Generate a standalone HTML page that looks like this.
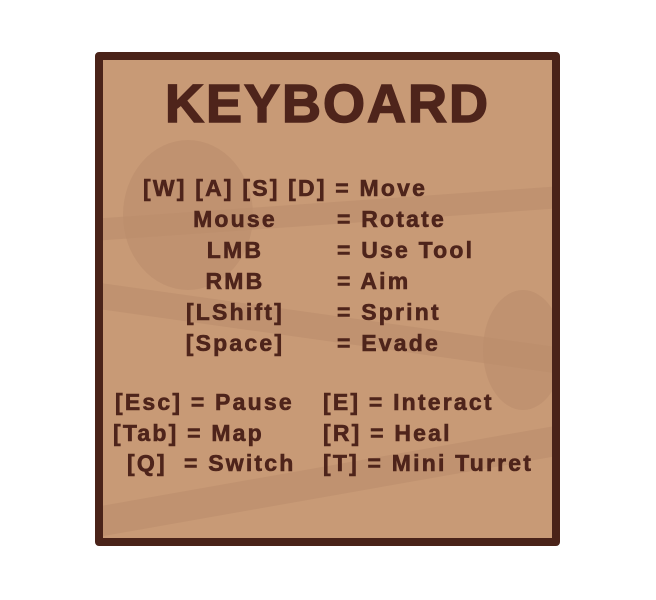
<!DOCTYPE html>
<html><head><style>
body{margin:0;width:656px;height:600px;background:#fff;position:relative;overflow:hidden;font-family:"Liberation Sans",sans-serif;}
.panel{position:absolute;left:95px;top:52px;width:449px;height:478px;border:8px solid #4a2319;border-radius:4px;background:#c89a76;overflow:hidden;}
.s{position:absolute;background:#b98d6c;opacity:.55;}
.t{position:absolute;color:#4e241b;font-weight:bold;font-size:23px;letter-spacing:2.2px;white-space:nowrap;line-height:24px;-webkit-text-stroke:0.6px #4e241b;}
.h{position:absolute;left:0;width:100%;text-align:center;top:14px;color:#4e241b;font-weight:bold;font-size:54px;letter-spacing:2px;line-height:60px;-webkit-text-stroke:1.5px #4e241b;}
.c{text-align:center;width:160px;}
</style></head><body>
<div class="panel">
<div class="s" style="left:20px;top:80px;width:130px;height:150px;border-radius:50%"></div>
<div class="s" style="left:-40px;top:140px;width:600px;height:22px;transform:rotate(-4deg);border-radius:12px"></div>
<div class="s" style="left:-40px;top:260px;width:600px;height:26px;transform:rotate(8deg);border-radius:12px"></div>
<div class="s" style="left:-40px;top:400px;width:600px;height:30px;transform:rotate(-10deg);border-radius:12px"></div>
<div class="s" style="left:380px;top:230px;width:80px;height:120px;border-radius:50%"></div>
<div class="h">KEYBOARD</div>
</div>
<div class="t" style="left:143px;top:176px">[W] [A] [S] [D] = Move</div>
<div class="t c" style="left:155px;top:207px">Mouse</div>
<div class="t c" style="left:155px;top:238px">LMB</div>
<div class="t c" style="left:155px;top:269px">RMB</div>
<div class="t c" style="left:155px;top:300px">[LShift]</div>
<div class="t c" style="left:155px;top:331px">[Space]</div>
<div class="t" style="left:337px;top:207px">= Rotate</div>
<div class="t" style="left:337px;top:238px">= Use Tool</div>
<div class="t" style="left:337px;top:269px">= Aim</div>
<div class="t" style="left:337px;top:300px">= Sprint</div>
<div class="t" style="left:337px;top:331px">= Evade</div>
<div class="t" style="left:115px;top:390px">[Esc] = Pause</div>
<div class="t" style="left:113px;top:421px">[Tab] = Map</div>
<div class="t" style="left:127px;top:451px">[Q]&nbsp;&nbsp;= Switch</div>
<div class="t" style="left:323px;top:390px">[E] = Interact</div>
<div class="t" style="left:323px;top:421px">[R] = Heal</div>
<div class="t" style="left:323px;top:451px">[T] = Mini Turret</div>
</body></html>
